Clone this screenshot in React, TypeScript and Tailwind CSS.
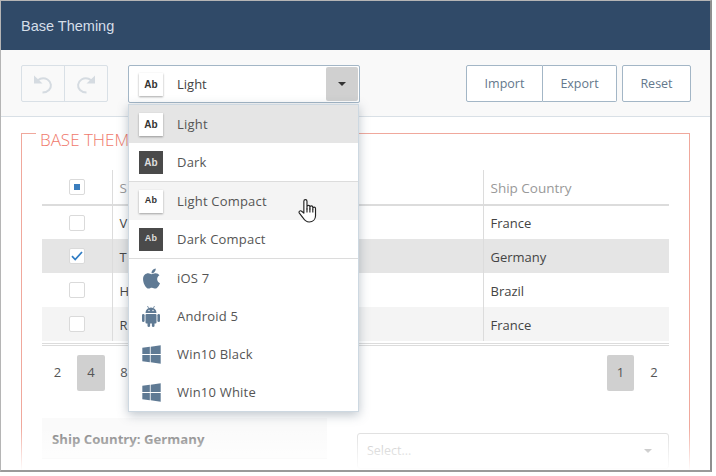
import React from 'react';
import { FaApple, FaWindows } from 'react-icons/fa';

const sans = "font-['Open_Sans','Liberation_Sans',sans-serif]";

const rows = [
  { name: 'V', country: 'France', bg: 'bg-white' },
  { name: 'T', country: 'Germany', bg: 'bg-[#e5e5e5]', checked: true },
  { name: 'H', country: 'Brazil', bg: 'bg-white' },
  { name: 'R', country: 'France', bg: 'bg-[#f4f4f4]' },
];

const Thumb = ({ dark, small }: { dark?: boolean; small?: boolean }) => (
  <span
    className={`flex h-[23px] w-[24px] shrink-0 items-center justify-center font-bold ${small ? 'text-[9px]' : 'text-[10px]'} ${
      dark ? 'bg-[#4a4a4a] text-[#dddddd]' : 'bg-white text-[#333333] shadow-[0_1px_2px_rgba(0,0,0,0.35)]'
    } font-['Liberation_Sans',sans-serif]`}
  >
    Ab
  </span>
);

const AndroidIcon = () => (
  <svg width="18" height="22" viewBox="0 0 18 22" fill="#5f7a94">
    <path d="M3.500 8a5.500 5.500 0 0 1 11 0z" />
    <path d="M5.500 1 6.800 3.500M12.500 1 11.200 3.500" stroke="#5f7a94" strokeWidth="0.8" />
    <circle cx="7" cy="5.500" r="0.7" fill="white" />
    <circle cx="11" cy="5.500" r="0.7" fill="white" />
    <rect x="3.500" y="9" width="11" height="9.500" rx="1" />
    <rect x="0" y="9" width="2.600" height="8" rx="1.300" />
    <rect x="15.400" y="9" width="2.600" height="8" rx="1.300" />
    <rect x="5.500" y="16" width="2.600" height="6" rx="1.300" />
    <rect x="9.900" y="16" width="2.600" height="6" rx="1.300" />
  </svg>
);

const MenuRow = ({ label, icon, active }: { label: string; icon: React.ReactNode; active?: string }) => (
  <div className={`flex h-[38px] items-center pl-[10px] text-[13px] tracking-[0.2px] text-[#555555] ${active ?? ''}`}>
    <span className="flex w-[24px] justify-center">{icon}</span>
    <span className="ml-[14px] pt-[2px]">{label}</span>
  </div>
);

const HistoryIcon = ({ flip }: { flip?: boolean }) => (
  <svg width="20" height="20" viewBox="0 0 20 20" fill="none" className={flip ? '-scale-x-100' : ''}>
    <path d="M4.500 6.500C7 4.500 11 3.500 14.500 5.500C18.500 8 19 13 16 16C14.500 17.500 12 18.500 9.500 18.500" stroke="#d5dbe1" strokeWidth="2" />
    <path d="M1 1.500 9.500 9.500H1z" fill="#d5dbe1" />
  </svg>
);

const Check = ({ state }: { state?: 'some' | 'on' }) => (
  <span className="flex h-[16px] w-[16px] items-center justify-center rounded-[2px] border border-[#dadada] bg-white">
    {state === 'some' && <span className="h-[6px] w-[6px] bg-[#3a7dbd]" />}
    {state === 'on' && (
      <svg width="12" height="10" viewBox="0 0 12 10" fill="none">
        <path d="M1 5.200 4.200 8.600 11 1" stroke="#2f7cc4" strokeWidth="1.700" />
      </svg>
    )}
  </span>
);

const ToolButton = ({ label, cls }: { label: string; cls: string }) => (
  <button className={`h-[37px] border-[#a3b6c6] bg-white pt-[2px] text-[12.5px] text-[#64788c] ${cls}`}>{label}</button>
);

export default function App() {
  return (
    <div className={`h-[476px] w-[716px] overflow-hidden bg-white ${sans}`}>
      <div className="relative h-[472px] w-[712px] overflow-hidden border-r-2 border-b-2 border-l border-t border-r-[#8f8f8f] border-b-[#9a9a9a] border-l-[#b5b5b5] border-t-[#b5b5b5] bg-white">
        <header className="flex h-[49px] items-center bg-[#304a68] pl-[20px] pt-[3px] font-['Liberation_Sans',sans-serif] text-[14.5px] text-[#d5dee8]">
          Base Theming
        </header>

        <div className="flex h-[67px] items-start border-b border-[#d9e0e6] bg-[#f9f9f9] pt-[15px] pl-[20px]">
          <div className="flex h-[37px] w-[87px] rounded-[2px] border border-[#d9e0e6]">
            <span className="flex flex-1 items-center justify-center border-r border-[#d9e0e6]">
              <HistoryIcon />
            </span>
            <span className="flex flex-1 items-center justify-center">
              <HistoryIcon flip />
            </span>
          </div>

          <div className="ml-[20px] flex h-[38px] w-[232px] items-center rounded-[2px] border border-[#a3b6c6] bg-white pl-[10px] pr-[1px] text-[13px] text-[#444444]">
            <Thumb />
            <span className="ml-[14px] flex-1 pt-[2px]">Light</span>
            <span className="flex h-[34px] w-[32px] items-center justify-center rounded-[2px] bg-[#d0d0d0]">
              <span className="h-0 w-0 border-x-[4px] border-t-[4px] border-x-transparent border-t-[#333333]" />
            </span>
          </div>

          <div className="ml-[106px] flex">
            <ToolButton label="Import" cls="w-[77px] rounded-l-[2px] border" />
            <ToolButton label="Export" cls="w-[74px] rounded-r-[2px] border border-l-0" />
          </div>
          <ToolButton label="Reset" cls="ml-[5px] w-[69px] rounded-[2px] border" />
        </div>

        <main className="relative h-[354px] px-[20px] pt-[16px]">
          <div className="relative h-[400px] w-[669px] border border-[#f0a89c] px-[20px] pt-[36px]">
            <span className="absolute -top-[6px] left-[14px] bg-white px-[4px] text-[17px] font-light leading-[24px] text-[#f0796b]">
              BASE THEMING
            </span>
            <table className="w-[627px] table-fixed border-collapse text-[13px] text-[#444444]">
              <thead>
                <tr className="h-[35px] border-b-2 border-[#dcdcdc]">
                  <th className="w-[70px]">
                    <div className="flex justify-center">
                      <Check state="some" />
                    </div>
                  </th>
                  <th className="w-[371px] border-l border-[#dcdcdc] pl-[7px] pt-[2px] text-left text-[13.5px] font-normal text-[#999999]">S</th>
                  <th className="border-l border-[#dcdcdc] pl-[7px] pt-[2px] text-left text-[13.5px] font-normal text-[#999999]">Ship Country</th>
                </tr>
              </thead>
              <tbody>
                {rows.map((row) => (
                  <tr key={row.name} className={`h-[34px] ${row.bg}`}>
                    <td>
                      <div className="flex justify-center">
                        <Check state={row.checked ? 'on' : undefined} />
                      </div>
                    </td>
                    <td className="border-l border-[#dcdcdc] pl-[7px] pt-[3px]">{row.name}</td>
                    <td className="border-l border-[#dcdcdc] pl-[7px] pt-[3px]">{row.country}</td>
                  </tr>
                ))}
              </tbody>
            </table>

            <div className="mt-[2px] h-[3px] w-[627px] border-y border-[#dcdcdc]" />

            <div className="mt-[9px] flex h-[36px] w-[627px] items-center text-[13px] text-[#555555]">
              <span className="w-[35px] pr-[4px] text-center">2</span>
              <span className="flex h-[36px] w-[28px] items-center justify-center rounded-[2px] bg-[#d0d0d0]">4</span>
              <span className="w-[38px] text-center">8</span>
              <span className="ml-auto flex h-[36px] w-[27px] items-center justify-center rounded-[2px] bg-[#d0d0d0]">1</span>
              <span className="w-[35px] pl-[5px] text-center">2</span>
            </div>

            <div className="mt-[27px] flex w-[627px] items-start">
              <div className="h-[41px] w-[285px] border-b border-[#eeeeee] bg-[#fafafa] pl-[10px] pt-[12px] text-[13.2px] font-bold text-[#777777]">
                Ship Country: Germany
              </div>
              <div className="ml-[30px] mt-[15px] flex h-[36px] w-[312px] items-center justify-between rounded-[3px] border border-[#dcdcdc] pl-[9px] pr-[16px] text-[12.5px] text-[#b5b5b5]">
                Select...
                <span className="h-0 w-0 border-x-[4px] border-t-[4px] border-x-transparent border-t-[#999999]" />
              </div>
            </div>
          </div>
          <div className="absolute inset-x-0 bottom-0 h-[44px] bg-gradient-to-b from-white/0 to-white" />
        </main>

        <div className="absolute left-[127px] top-[103px] w-[231px] border border-[#cdd8e1] bg-white shadow-[0_3px_10px_rgba(70,90,110,0.35)]">
          <MenuRow label="Light" icon={<Thumb />} active="bg-[#e5e5e5]" />
          <MenuRow label="Dark" icon={<Thumb dark />} />
          <div className="border-t border-[#dcdcdc]" />
          <MenuRow label="Light Compact" icon={<Thumb small />} active="bg-[#f4f4f4]" />
          <MenuRow label="Dark Compact" icon={<Thumb dark small />} />
          <div className="border-t border-[#dcdcdc]" />
          <MenuRow label="iOS 7" icon={<FaApple size={23} color="#5f7a94" />} />
          <MenuRow label="Android 5" icon={<AndroidIcon />} />
          <MenuRow label="Win10 Black" icon={<FaWindows size={21} color="#5f7a94" />} />
          <MenuRow label="Win10 White" icon={<FaWindows size={21} color="#5f7a94" />} />
        </div>

        <svg className="absolute left-[297px] top-[197px]" width="19" height="25" viewBox="0 0 18 24" fill="white" stroke="#222222" strokeWidth="1.100">
          <path d="M5.500 14.500V3a1.500 1.500 0 0 1 3 0v7.500-2a1.400 1.400 0 0 1 2.800 0v2-1.500a1.400 1.400 0 0 1 2.800 0v2-1a1.300 1.300 0 0 1 2.600 0V17c0 3.500-2.500 6-6 6-3 0-4.500-1.500-6-4l-3.500-4.500c-1-1.500.8-3 2.200-1.800z" strokeLinejoin="round" />
          <path d="M8.500 10v4M11.300 10v4M14.100 11v3" fill="none" />
        </svg>
      </div>
    </div>
  );
}
